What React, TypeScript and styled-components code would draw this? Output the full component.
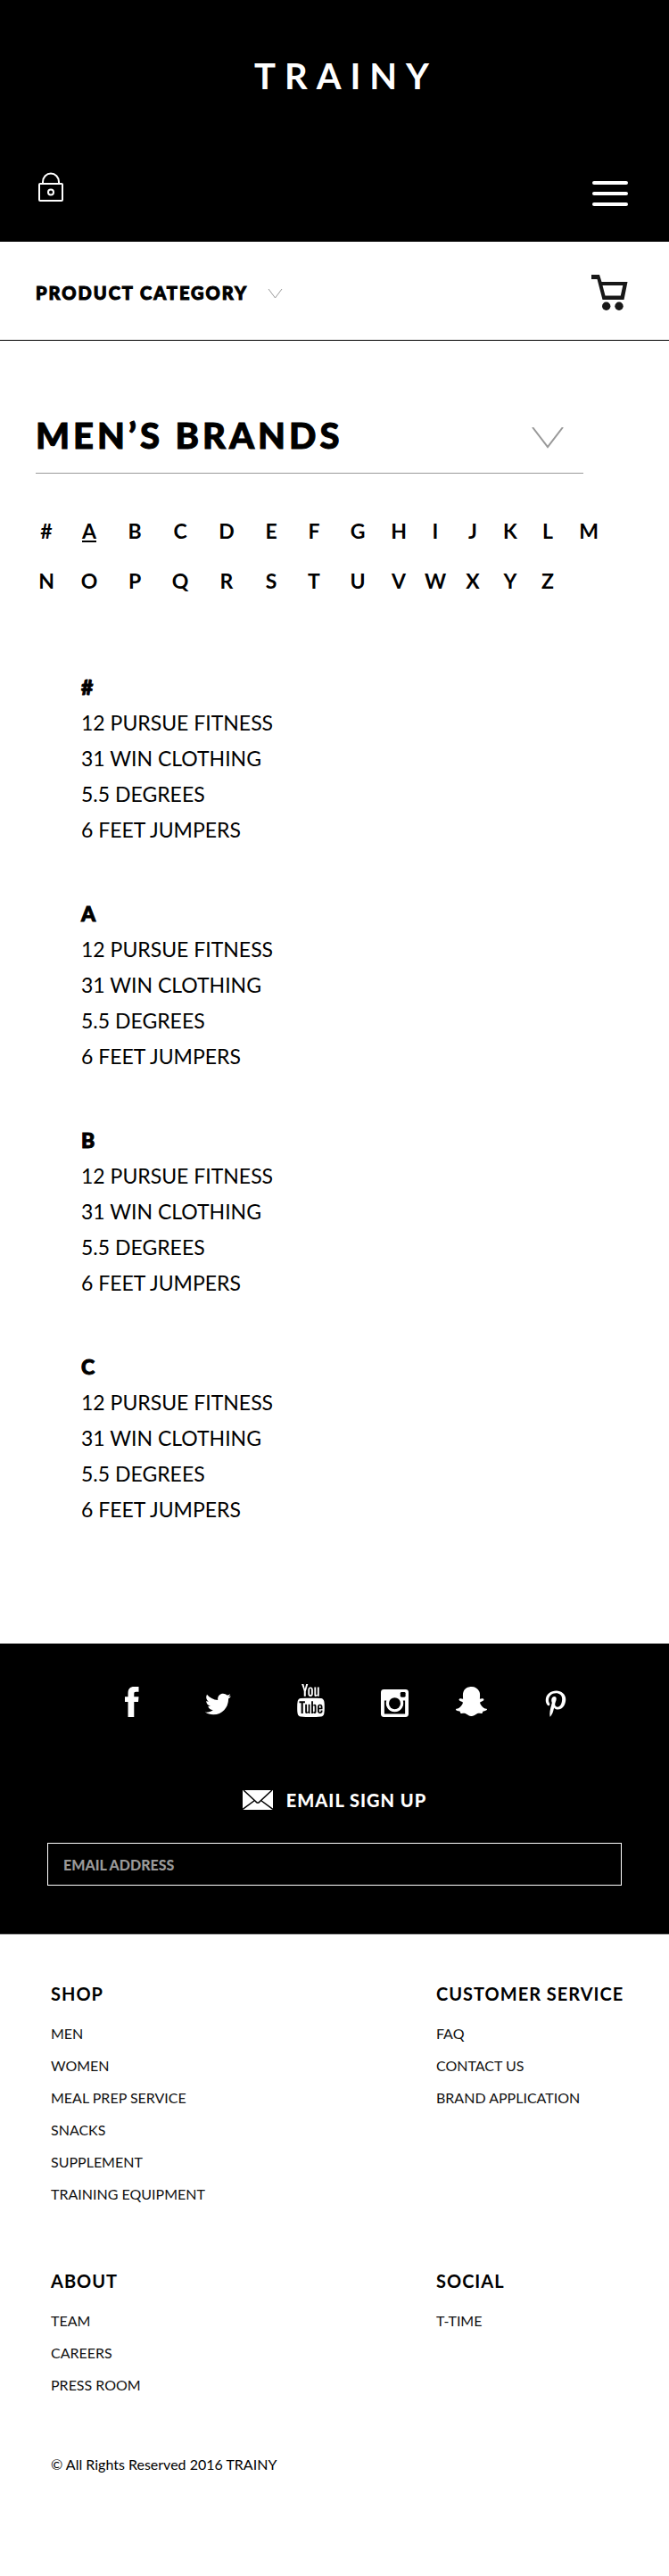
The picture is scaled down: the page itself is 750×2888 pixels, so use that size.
import React from 'react';
import styled, { createGlobalStyle } from 'styled-components';
import { FaTwitter, FaSnapchatGhost, FaPinterestP } from 'react-icons/fa';
import { TfiYoutube } from 'react-icons/tfi';

const GlobalStyle = createGlobalStyle`
  * { box-sizing: border-box; }
  body { margin: 0; background: #fff; color: #000; font-family: Lato, "Liberation Sans", sans-serif; }
  h1, h2, h3, p, ul { margin: 0; padding: 0; }
  ul { list-style: none; }
  a { color: inherit; text-decoration: none; }
  svg { display: block; }
  button { padding: 0; border: 0; background: none; color: inherit; font: inherit; cursor: pointer; }
`;

const Header = styled.header`
  background: #000;
  color: #fff;
  padding: 61px 46px 40px 42px;
`;
const Logo = styled.a`
  display: block;
  text-align: center;
  font-size: 40px;
  line-height: 48px;
  font-weight: 700;
  letter-spacing: 10px;
  padding-left: 30px;
`;
const HeaderTools = styled.div`
  display: flex;
  justify-content: space-between;
  align-items: center;
  height: 42px;
  margin-top: 80px;
`;
const IconButton = styled.button`
  display: flex;
  align-items: center;
`;
const MenuButton = styled(IconButton)`
  align-self: flex-end;
`;

const CategoryBar = styled.nav`
  display: flex;
  justify-content: space-between;
  align-items: center;
  height: 111px;
  padding: 4px 46px 0 40px;
  border-bottom: 1px solid #000;
`;
const CategoryButton = styled.button`
  display: flex;
  align-items: baseline;
  gap: 22px;
  font-size: 20px;
  line-height: 24px;
  font-weight: 900;
  letter-spacing: 2px;
  -webkit-text-stroke: 1px currentColor;
`;

const TitleRow = styled.div`
  display: flex;
  justify-content: space-between;
  align-items: baseline;
  margin: 74px 96px 0 40px;
  padding: 8px 22px 18px 0;
  border-bottom: 1px solid #999;
`;
const Title = styled.h1`
  font-size: 40px;
  line-height: 48px;
  font-weight: 900;
  letter-spacing: 4px;
  -webkit-text-stroke: 1px currentColor;
`;

const Letters = styled.nav`
  display: grid;
  grid-template-columns: 48fr 48fr 54fr 48fr 56fr 44fr 52fr 46fr 46fr 36fr 48fr 36fr 48fr 44fr;
  margin: 36px 68px 0 28px;
`;
const Letter = styled.a<{ $current: boolean }>`
  justify-self: center;
  font-size: 23px;
  line-height: 56px;
  font-weight: 700;
  text-decoration: ${p => (p.$current ? 'underline' : 'none')};
  text-decoration-thickness: 2px;
  text-underline-offset: 2px;
`;

const Brands = styled.main`
  display: flex;
  flex-direction: column;
  gap: 54px;
  padding: 71px 40px 130px 91px;
`;
const GroupTitle = styled.h2`
  font-size: 23px;
  line-height: 40px;
  font-weight: 900;
  -webkit-text-stroke: 1px currentColor;
`;
const Brand = styled.li`
  font-size: 23px;
  line-height: 40px;
`;

const Band = styled.section`
  background: #000;
  color: #fff;
  padding: 45px 53px 54px;
  border: solid #999;
  border-width: 1px 0;
`;
const Socials = styled.div`
  display: grid;
  grid-template-columns: 96fr 97fr 110fr 79fr 93fr 96fr;
  justify-items: center;
  align-items: end;
  height: 37px;
  padding: 0 26px 0 47px;
`;
const SignUp = styled.form`
  margin-top: 69px;
`;
const SignUpTitle = styled.label`
  display: flex;
  align-items: center;
  justify-content: center;
  gap: 15px;
  height: 48px;
  font-size: 20px;
  font-weight: 900;
  letter-spacing: 1px;
`;
const EmailInput = styled.input`
  display: block;
  width: 100%;
  height: 48px;
  margin-top: 24px;
  padding: 0 17px;
  border: 1px solid #fff;
  border-radius: 0;
  background: #000;
  color: #fff;
  font: 900 16px/24px Lato, "Liberation Sans", sans-serif;
  &::placeholder { color: #999; opacity: 1; }
`;

const Footer = styled.footer`
  padding: 52px 50px 108px 57px;
`;
const Columns = styled.div`
  display: grid;
  grid-template-columns: 432fr 211fr;
  row-gap: 65px;
`;
const ColumnTitle = styled.h3`
  font-size: 20px;
  line-height: 28px;
  font-weight: 700;
  letter-spacing: 1px;
  margin-bottom: 13px;
  white-space: nowrap;
`;
const FooterItem = styled.li`
  font-size: 16px;
  line-height: 36px;
  color: #111;
`;
const Copyright = styled.p`
  margin-top: 53px;
  font-size: 16px;
  line-height: 36px;
`;

const LockIcon = () => (
  <svg width="30" height="34" viewBox="0 0 30 34" fill="none" stroke="#fff" strokeWidth="2">
    <rect x="2" y="13" width="26" height="19" rx="1" />
    <path d="M6 13V11a9 9.500 0 0 1 18 0v2" />
    <circle cx="15" cy="22.500" r="3" />
  </svg>
);
const MenuIcon = () => (
  <svg width="40" height="28" viewBox="0 0 40 28" fill="#fff">
    <rect width="40" height="4" rx="2" />
    <rect y="12" width="40" height="4" rx="2" />
    <rect y="24" width="40" height="4" rx="2" />
  </svg>
);
const CartIcon = () => (
  <svg width="41" height="40" viewBox="0 0 41 40">
    <path d="M0 0H9L11.500 8H40.500L36.500 28H12.500L6.500 5H0ZM12.500 12L15.500 23.500H32.800L35.300 12Z" fill="#181818" fillRule="evenodd" />
    <circle cx="16.700" cy="35.300" r="4.700" fill="#181818" />
    <circle cx="31" cy="35.300" r="4.700" fill="#181818" />
  </svg>
);
const Chevron = ({ w, h, s }: { w: number; h: number; s: number }) => (
  <svg width={w} height={h} fill="none" stroke="#999" strokeWidth={s}>
    <path d={`M1 0L${w / 2} ${h - 2}L${w - 1} 0`} />
  </svg>
);
const FacebookIcon = () => (
  <svg width="16" height="34" viewBox="0 0 16 34" fill="#fff">
    <path d="M3.500 34V17H0V11.200H3.500V7.500C3.500 2.500 5.500 0 10.500 0H15.500V5.800H12.500C10.500 5.800 10.300 6.600 10.300 8.300V11.200H15.500L15 17H10.300V34Z" />
  </svg>
);
const InstagramIcon = () => (
  <svg width="31" height="31" viewBox="0 0 32 32">
    <rect width="32" height="32" rx="3.500" fill="#fff" />
    <path d="M4 13V28.500H28V13H25.500A10 10 0 1 1 6.500 13Z" fill="#000" />
    <circle cx="16" cy="16.200" r="8.200" fill="none" stroke="#fff" strokeWidth="3" />
    <circle cx="16" cy="16.200" r="6.700" fill="#000" />
    <rect x="22.500" y="3" width="6" height="6" rx="1.500" fill="#000" />
  </svg>
);
const MailIcon = () => (
  <svg width="34" height="22" viewBox="0 0 34 22">
    <rect width="34" height="22" fill="#fff" />
    <path d="M1 0L14.500 12.500Q17 16 19.500 12.500L33 0M0 21.500L13.500 11.500M34 21.500L20.500 11.500" fill="none" stroke="#000" strokeWidth="1.500" />
  </svg>
);

const letters = '#ABCDEFGHIJKLMNOPQRSTUVWXYZ'.split('');
const groups = ['#', 'A', 'B', 'C'];
const brands = ['12 PURSUE FITNESS', '31 WIN CLOTHING', '5.5 DEGREES', '6 FEET JUMPERS'];
const columns = [
  { title: 'SHOP', items: ['MEN', 'WOMEN', 'MEAL PREP SERVICE', 'SNACKS', 'SUPPLEMENT', 'TRAINING EQUIPMENT'] },
  { title: 'CUSTOMER SERVICE', items: ['FAQ', 'CONTACT US', 'BRAND APPLICATION'] },
  { title: 'ABOUT', items: ['TEAM', 'CAREERS', 'PRESS ROOM'] },
  { title: 'SOCIAL', items: ['T-TIME'] },
];

export default function App() {
  return (
    <>
      <GlobalStyle />
      <Header>
        <Logo href="#">TRAINY</Logo>
        <HeaderTools>
          <IconButton aria-label="Account"><LockIcon /></IconButton>
          <MenuButton aria-label="Menu"><MenuIcon /></MenuButton>
        </HeaderTools>
      </Header>
      <CategoryBar>
        <CategoryButton>PRODUCT CATEGORY <Chevron w={17} h={12} s={1} /></CategoryButton>
        <IconButton aria-label="Cart"><CartIcon /></IconButton>
      </CategoryBar>
      <TitleRow>
        <Title>MEN’S BRANDS</Title>
        <IconButton aria-label="Change brands"><Chevron w={36} h={24} s={2} /></IconButton>
      </TitleRow>
      <Letters>
        {letters.map(l => <Letter key={l} href="#" $current={l === 'A'}>{l}</Letter>)}
      </Letters>
      <Brands>
        {groups.map(g => (
          <section key={g}>
            <GroupTitle>{g}</GroupTitle>
            <ul>{brands.map(b => <Brand key={b}><a href="#">{b}</a></Brand>)}</ul>
          </section>
        ))}
      </Brands>
      <Band>
        <Socials>
          <a href="#" aria-label="Facebook"><FacebookIcon /></a>
          <a href="#" aria-label="Twitter"><FaTwitter size={29} /></a>
          <a href="#" aria-label="YouTube"><TfiYoutube size={37} /></a>
          <a href="#" aria-label="Instagram"><InstagramIcon /></a>
          <a href="#" aria-label="Snapchat"><FaSnapchatGhost size={35} /></a>
          <a href="#" aria-label="Pinterest"><FaPinterestP size={30} /></a>
        </Socials>
        <SignUp>
          <SignUpTitle htmlFor="email"><MailIcon /> EMAIL SIGN UP</SignUpTitle>
          <EmailInput id="email" type="email" placeholder="EMAIL ADDRESS" />
        </SignUp>
      </Band>
      <Footer>
        <Columns>
          {columns.map(c => (
            <section key={c.title}>
              <ColumnTitle>{c.title}</ColumnTitle>
              <ul>{c.items.map(i => <FooterItem key={i}><a href="#">{i}</a></FooterItem>)}</ul>
            </section>
          ))}
        </Columns>
        <Copyright>© All Rights Reserved 2016 TRAINY</Copyright>
      </Footer>
    </>
  );
}
